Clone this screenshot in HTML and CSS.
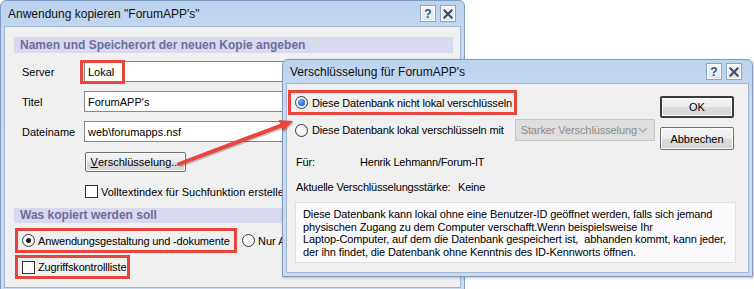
FILE: index.html
```html
<!DOCTYPE html>
<html lang="de">
<head>
<meta charset="utf-8">
<title>Anwendung kopieren</title>
<link rel="stylesheet" href="styles.css">
</head>
<body>
<div class="stage">

  <div class="dlg dlg-main">
    <div class="titlebar">
      <span class="title">Anwendung kopieren "ForumAPP's"</span>
      <div class="tbtns">
        <span class="tbtn">?</span>
        <span class="tbtn"><svg width="10" height="10" viewBox="0 0 10 10"><path d="M1.5 1.5 L8.5 8.5 M8.5 1.5 L1.5 8.5" stroke="#3e5068" stroke-width="2.2" stroke-linecap="square"/></svg></span>
      </div>
    </div>
    <div class="body main-body">
      <div class="band">Namen und Speicherort der neuen Kopie angeben</div>
      <div class="form">
        <span class="lbl">Server</span>
        <div class="input"><span class="txt">Lokal</span><span class="mark mark-lokal"></span></div>
        <span class="lbl">Titel</span>
        <div class="input"><span class="txt">ForumAPP's</span></div>
        <span class="lbl">Dateiname</span>
        <div class="input"><span class="txt">web\forumapps.nsf</span></div>
      </div>
      <div class="btn btn-enc"><u>V</u>erschlüsselung...</div>
      <div class="check-row fulltext"><span class="cb"></span><span>Volltextindex für Suchfunktion erstellen</span></div>
      <div class="band band2">Was kopiert werden soll</div>
      <div class="copy-row">
        <div class="hl-box radio-box"><span class="rb rb-on"></span><span>Anwendungsgestaltung und -dokumente</span></div>
        <div class="opt-only"><span class="rb"></span><span>Nur Anwendungsgestaltung</span></div>
      </div>
      <div class="hl-box acl-box"><span class="cb"></span><span>Zugriffskontrollliste</span></div>
    </div>
  </div>

  <div class="dlg dlg-enc">
    <div class="titlebar titlebar-enc">
      <span class="title">Verschlüsselung für ForumAPP's</span>
      <div class="tbtns">
        <span class="tbtn">?</span>
        <span class="tbtn"><svg width="10" height="10" viewBox="0 0 10 10"><path d="M1.5 1.5 L8.5 8.5 M8.5 1.5 L1.5 8.5" stroke="#3e5068" stroke-width="2.2" stroke-linecap="square"/></svg></span>
      </div>
    </div>
    <div class="body enc-body">
      <div class="enc-top">
        <div class="enc-opts">
          <div class="hl-box enc-radio1"><span class="rb rb-blue"></span><span>Diese Datenbank nicht lokal verschlüsseln</span></div>
          <div class="enc-radio2">
            <span class="rb"></span><span class="r2-text">Diese Datenbank lokal verschlüsseln mit</span>
            <div class="select"><span>Starker Verschlüsselung</span><svg width="10" height="6" viewBox="0 0 10 6"><path d="M1 1 L5 5 L9 1" fill="none" stroke="#a8a8a8" stroke-width="1.2"/></svg></div>
          </div>
        </div>
        <div class="enc-btns">
          <div class="btn btn-ok">OK</div>
          <div class="btn btn-cancel">Abbrechen</div>
        </div>
      </div>
      <div class="info-row row-fuer"><span class="k1">Für:</span><span>Henrik Lehmann/Forum-IT</span></div>
      <div class="info-row row-strength"><span class="k2">Aktuelle Verschlüsselungsstärke:</span><span>Keine</span></div>
      <div class="note">Diese Datenbank kann lokal ohne eine Benutzer-ID geöffnet werden, falls sich jemand<br>physischen Zugang zu dem Computer verschafft.Wenn beispielsweise Ihr<br>Laptop-Computer, auf dem die Datenbank gespeichert ist,&nbsp; abhanden kommt, kann jeder,<br>der ihn findet, die Datenbank ohne Kenntnis des ID-Kennworts öffnen.</div>
    </div>
  </div>

  <svg class="arrow" width="754" height="289" viewBox="0 0 754 289">
    <g transform="translate(1,1.5)" opacity="0.22">
      <line x1="179" y1="164" x2="281" y2="125.6" stroke="#000" stroke-width="4"/>
      <polygon points="293,121 282.9,131.2 278.7,120" fill="#000"/>
    </g>
    <line x1="179" y1="164" x2="281" y2="125.6" stroke="#e9453d" stroke-width="4" stroke-linecap="round"/>
    <polygon points="293,121 282.9,131.2 278.7,120" fill="#e9453d"/>
  </svg>

</div>
</body>
</html>
```

FILE: styles.css
```css
* { box-sizing: border-box; margin: 0; padding: 0; }
html, body { background: #ffffff; }
body {
  width: 754px;
  height: 289px;
  overflow: hidden;
  font-family: "Liberation Sans", Arial, sans-serif;
  font-size: 11px;
  color: #000;
}
.stage { position: relative; width: 754px; height: 289px; }

/* window frame */
.dlg {
  display: flex;
  flex-direction: column;
  border: 1px solid #7f9cc2;
  border-radius: 6px 6px 0 0;
  background: linear-gradient(#bcd3ee, #c6d9ef 40px, #c9dbf0);
  padding: 0 3px 3px;
}
.dlg-main { width: 465px; height: 292px; }
.dlg-enc {
  position: absolute;
  left: 282px;
  top: 59px;
  width: 471px;
  height: 218px;
  box-shadow: 1px 1px 3px rgba(0,0,0,0.25);
}

.titlebar {
  height: 25px;
  display: flex;
  align-items: center;
  justify-content: space-between;
  padding: 0 2px 0 4px;
}
.titlebar-enc { height: 23px; padding-left: 4px; }
.title { font-size: 12px; color: #111; }
.tbtns { display: flex; gap: 4px; align-self: flex-start; margin-top: 4px; }
.titlebar-enc .tbtns { margin-top: 3px; }
.tbtn {
  width: 16px;
  height: 17px;
  border: 1px solid #8ea4c0;
  background: linear-gradient(#f3f6fa, #dde6f0);
  display: flex;
  align-items: center;
  justify-content: center;
  font-weight: bold;
  font-size: 12px;
  color: #3e5068;
  box-shadow: inset 0 0 0 1px #fbfcfe;
}
.dlg-main .tbtns { margin-right: 3px; }
.dlg-enc .tbtns { margin-right: 5px; }

.body {
  flex: 1;
  background: #f0f0f0;
  border: 1px solid #a3b6d0;
}

/* main dialog */
.main-body { padding: 10px 7px 0 9px; }
.band {
  height: 16px;
  background: #d8d8ee;
  color: #6d6d9d;
  font-weight: bold;
  font-size: 12px;
  line-height: 16px;
  padding-left: 6px;
}
.form {
  display: grid;
  grid-template-columns: 62px 1fr;
  row-gap: 9px;
  margin-top: 8px;
  align-items: center;
  padding-left: 8px;
}
.lbl { font-size: 11px; }
.input {
  position: relative;
  height: 21px;
  background: #fff;
  border: 1px solid #828790;
  display: flex;
  align-items: center;
  padding-left: 3px;
  font-size: 11px;
}
.mark {
  position: absolute;
  border: 3px solid #e8453c;
}
.mark-lokal { left: -5px; top: -2px; width: 45px; height: 24px; }

.btn {
  display: flex;
  align-items: center;
  justify-content: center;
  border: 1px solid #707070;
  border-radius: 2px;
  background: linear-gradient(#f4f4f4 0%, #ececec 50%, #dcdcdc 51%, #d4d4d4 100%);
  box-shadow: inset 0 0 0 1px #fbfbfb;
  font-size: 11px;
}
.btn-enc { width: 101px; height: 20px; margin: 10px 0 0 71px; }

.cb {
  display: inline-block;
  width: 13px;
  height: 13px;
  border: 1px solid #333;
  background: #fff;
  flex: none;
}
.check-row {
  display: flex;
  align-items: center;
  gap: 3px;
  margin: 13px 0 0 71px;
  height: 13px;
  font-size: 11px;
  white-space: nowrap;
}
.band2 { margin-top: 10px; height: 15px; line-height: 15px; }

.hl-box {
  display: flex;
  align-items: center;
  gap: 3px;
  border: 3px solid #e8453c;
  font-size: 11px;
  letter-spacing: -0.15px;
  white-space: nowrap;
}
.copy-row { display: flex; align-items: center; margin-top: 5px; margin-left: 1px; }
.radio-box { width: 222px; height: 25px; padding-left: 4px; }
.opt-only { display: flex; align-items: center; gap: 3px; margin-left: 5px; font-size: 11px; white-space: nowrap; }
.acl-box { width: 115px; height: 24px; padding-left: 4px; margin-top: 2px; margin-left: 1px; }

.rb {
  display: inline-block;
  position: relative;
  width: 13px;
  height: 13px;
  border-radius: 50%;
  border: 1px solid #3c3c3c;
  background: radial-gradient(circle at 40% 40%, #fff, #e8e8e8);
  flex: none;
}
.rb-on::after {
  content: "";
  position: absolute;
  left: 3px; top: 3px;
  width: 5px; height: 5px;
  border-radius: 50%;
  background: #1c1c1c;
}
.rb-blue { border-color: #3b3b3b; }
.rb-blue::after {
  content: "";
  position: absolute;
  left: 2px; top: 2px;
  width: 7px; height: 7px;
  border-radius: 50%;
  background: radial-gradient(circle at 40% 35%, #6fb4f5, #0f67d8 70%);
}

/* encryption dialog */
.enc-body { padding: 6px 10px 0 1px; }
.enc-top { display: flex; justify-content: space-between; }
.enc-opts { display: flex; flex-direction: column; }
.enc-radio1 { width: 229px; height: 25px; padding-left: 4px; gap: 4px; }
.enc-radio2 { display: flex; align-items: center; margin: 4px 0 0 7px; height: 22px; font-size: 11px; letter-spacing: -0.15px; white-space: nowrap; }
.r2-text { margin-left: 4px; }
.select {
  width: 140px;
  height: 22px;
  margin-left: 11px;
  border: 1px solid #c4c4c4;
  background: #dedede;
  color: #8d8d8d;
  display: flex;
  align-items: center;
  justify-content: space-between;
  padding: 0 6px 0 5px;
  font-size: 11px;
  letter-spacing: -0.1px;
}
.enc-btns { display: flex; flex-direction: column; gap: 9px; margin-top: 6px; margin-right: 4px; }
.btn-ok { width: 74px; height: 22px; border: 2px solid #3c3c3c; border-radius: 2px; }
.btn-cancel { width: 74px; height: 23px; }

.info-row { display: flex; margin-left: 8px; font-size: 11px; letter-spacing: -0.2px; }
.row-fuer { margin-top: 6px; }
.row-strength { margin-top: 13px; }
.k1 { width: 64px; }
.k2 { width: 162px; }
.note {
  margin: 9px 2px 0 7px;
  height: 61px;
  background: #fafafd;
  border: 1px solid #dfdfe6;
  padding: 5px 0 0 7px;
  font-size: 11px;
  line-height: 12.6px;
  letter-spacing: -0.12px;
  white-space: nowrap;
}

.arrow { position: absolute; left: 0; top: 0; pointer-events: none; }
```
